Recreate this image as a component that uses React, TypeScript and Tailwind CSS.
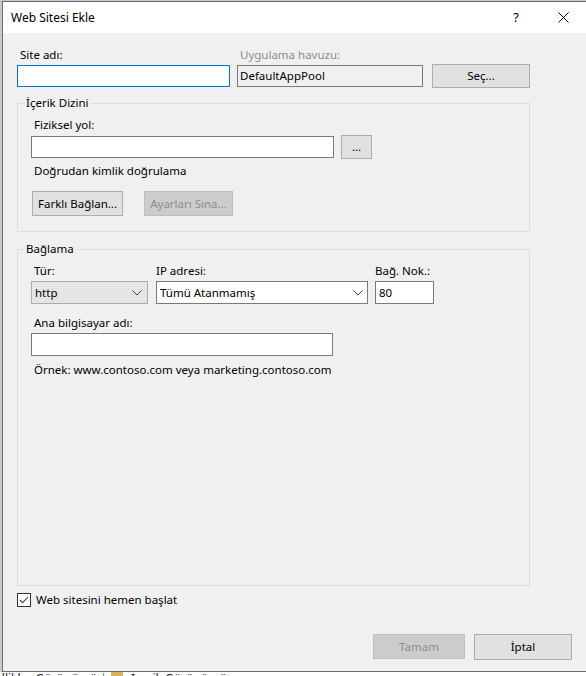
import type { ReactNode } from 'react';

function Button({
  children,
  disabled,
  className = '',
}: {
  children: ReactNode;
  disabled?: boolean;
  className?: string;
}) {
  return (
    <div
      className={`flex shrink-0 items-center justify-center border ${
        disabled ? 'border-[#bfbfbf] bg-[#cccccc] text-[#8d8d8d]' : 'border-[#adadad] bg-[#e1e1e1] text-black'
      } ${className}`}
    >
      {children}
    </div>
  );
}

function Label({ children, muted, flush }: { children: ReactNode; muted?: boolean; flush?: boolean }) {
  return (
    <div
      className={`mb-[2px] leading-[16px] ${flush ? 'pl-0' : 'pl-[3px]'} ${muted ? 'text-[#8d8d8d]' : 'text-black'}`}
    >
      {children}
    </div>
  );
}

function Chevron() {
  return (
    <svg width="10" height="6" viewBox="0 0 10 6" className="shrink-0">
      <polyline points="0.5,0.5 5,5 9.5,0.5" fill="none" stroke="#404040" strokeWidth="1" />
    </svg>
  );
}

function Group({ title, className = '', children }: { title: string; className?: string; children: ReactNode }) {
  return (
    <fieldset className={`w-[513px] border border-[#dcdcdc] p-0 ${className}`}>
      <legend className="ml-[6px] px-[2px] leading-[16px]">{title}</legend>
      <div className="pl-[13px]">{children}</div>
    </fieldset>
  );
}

export default function App() {
  return (
    <div className="h-[676px] w-[586px] overflow-hidden bg-[#c8c8c8] pl-[2px] pt-[1px] font-['Noto_Sans',sans-serif] text-[11.5px] text-black">
      <div className="flex h-[671px] flex-col border-t border-b border-l border-[#6b6b6b] bg-[#f0f0f0]">
        {/* title bar */}
        <div className="flex h-[31px] shrink-0 items-center bg-white pl-[8px]">
          <span className="text-[12px]">Web Sitesi Ekle</span>
          <div className="ml-auto flex items-center pr-[17px]">
            <span className="w-[12px] text-center text-[13px]">?</span>
            <svg width="11" height="11" viewBox="0 0 11 11" className="ml-[36px]">
              <path d="M0.5 0.5 L10.5 10.5 M10.5 0.5 L0.5 10.5" stroke="#000" strokeWidth="1" />
            </svg>
          </div>
        </div>

        {/* body */}
        <div className="flex flex-1 flex-col pl-[14px] pt-[14px]">
          <div className="flex items-end">
            <div className="w-[213px]">
              <Label>Site adı:</Label>
              <div className="h-[22px] border border-[#0078d7] bg-white" />
            </div>
            <div className="ml-[7px] w-[186px]">
              <Label muted>Uygulama havuzu:</Label>
              <div className="flex h-[22px] items-center border border-[#7a7a7a] bg-[#f0f0f0] pl-[2px]">
                DefaultAppPool
              </div>
            </div>
            <Button className="mb-[-1px] ml-[9px] h-[24px] w-[98px]">Seç...</Button>
          </div>

          <Group title="İçerik Dizini" className="mt-[8px]">
            <div className="pt-[6px]">
              <Label>Fiziksel yol:</Label>
              <div className="flex items-center">
                <div className="h-[22px] w-[303px] border border-[#7a7a7a] bg-white" />
                <Button className="ml-[7px] h-[24px] w-[31px]">...</Button>
              </div>
              <div className="mt-[4px] pl-[3px] leading-[16px]">Doğrudan kimlik doğrulama</div>
              <div className="mt-[12px] flex pb-[15px] pl-[1px]">
                <Button className="h-[25px] w-[91px]">Farklı Bağlan...</Button>
                <Button disabled className="ml-[21px] h-[25px] w-[89px]">
                  Ayarları Sına...
                </Button>
              </div>
            </div>
          </Group>

          <Group title="Bağlama" className="mt-[9px] h-[345px]">
            <div className="pt-[6px]">
              <div className="flex">
                <div className="w-[117px]">
                  <Label>Tür:</Label>
                  <div className="flex h-[23px] items-center justify-between border border-[#acacac] bg-[#e5e5e5] pl-[3px] pr-[5px]">
                    <span>http</span>
                    <Chevron />
                  </div>
                </div>
                <div className="ml-[8px] w-[212px]">
                  <Label flush>IP adresi:</Label>
                  <div className="flex h-[23px] items-center justify-between border border-[#7a7a7a] bg-white pl-[3px] pr-[4px]">
                    <span>Tümü Atanmamış</span>
                    <Chevron />
                  </div>
                </div>
                <div className="ml-[7px] w-[59px]">
                  <Label flush>Bağ. Nok.:</Label>
                  <div className="flex h-[23px] items-center border border-[#7a7a7a] bg-white pl-[3px]">80</div>
                </div>
              </div>
              <div className="mt-[11px]">
                <Label>Ana bilgisayar adı:</Label>
                <div className="h-[23px] w-[302px] border border-[#7a7a7a] bg-white" />
              </div>
              <div className="mt-[6px] pl-[3px] leading-[16px]">Örnek: www.contoso.com veya marketing.contoso.com</div>
            </div>
          </Group>

          <div className="mt-[6px] flex items-center">
            <div className="flex h-[14px] w-[14px] items-center justify-center border border-[#333333] bg-white">
              <svg width="12" height="12" viewBox="0 0 12 12">
                <path d="M2 6.2 L4.6 8.8 L10 3" fill="none" stroke="#333" strokeWidth="1.1" />
              </svg>
            </div>
            <span className="ml-[5px] leading-[16px]">Web sitesini hemen başlat</span>
          </div>

          <div className="mt-[26px] flex justify-end pr-[14px]">
            <Button disabled className="h-[25px] w-[92px]">
              Tamam
            </Button>
            <Button className="ml-[9px] h-[26px] w-[98px]">İptal</Button>
          </div>
        </div>
      </div>
      <div className="-ml-[2px] flex h-[4px] items-start overflow-hidden bg-white text-[12px] leading-[14px] text-[#222]">
        <span className="-ml-[20px] whitespace-nowrap">Özellikler Görünümü</span>
        <span className="ml-[3px] text-[#6d6d6d]">|</span>
        <span className="ml-[4px] h-[10px] w-[12px] bg-[#d9b35a]" />
        <span className="ml-[8px] whitespace-nowrap">İçerik Görünümü</span>
      </div>
    </div>
  );
}
